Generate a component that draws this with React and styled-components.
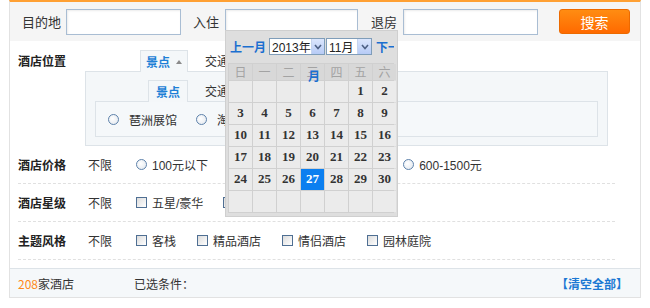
import React from "react";
import styled, { createGlobalStyle } from "styled-components";

const GlobalStyle = createGlobalStyle`
  body {
    margin: 0;
    background: #fff;
    font-family: "Liberation Sans", "Noto Sans CJK SC", sans-serif;
    font-size: 12px;
    color: #333;
  }
`;

const Wrapper = styled.div`
  margin-left: 9px;
  width: 630px;
  border: 1px solid #e2e2e2;
  border-top: 2px solid #ffa033;
`;

const SearchBar = styled.div`
  display: flex;
  align-items: center;
  height: 39px;
  background: #f5f5f5;
  padding-left: 12px;
`;

const SearchLabel = styled.label`
  width: ${(p) => p.$w}px;
  margin-left: ${(p) => p.$ml || 0}px;
  font-size: 13px;
  color: #333;
  flex-shrink: 0;
`;

const Field = styled.div`
  position: relative;
  width: ${(p) => p.$w}px;
  height: 26px;
  flex-shrink: 0;
`;

const Input = styled.input`
  box-sizing: border-box;
  width: 100%;
  height: 100%;
  border: 1px solid #a9bdd3;
  box-shadow: inset 1px 1px 2px rgba(0, 0, 0, 0.08);
  background: #fff;
  outline: none;
`;

const SearchButton = styled.button`
  margin-left: 21px;
  width: 71px;
  height: 25px;
  border: 1px solid #ec6a00;
  border-radius: 3px;
  background: linear-gradient(#ff8c12, #ff6a00);
  color: #fff;
  font-family: "Noto Sans CJK SC", sans-serif;
  font-size: 14px;
  padding: 0;
`;

/* calendar */
const Calendar = styled.div`
  position: absolute;
  left: 0;
  top: 21px;
  z-index: 5;
  box-sizing: border-box;
  width: 173px;
  padding: 0 3px 3px 3px;
  background: #dedede;
  border: 1px solid #cfcfcf;
`;

const CalHead = styled.div`
  display: flex;
  align-items: center;
  height: 32px;
  padding-left: 1px;
  overflow: hidden;
  white-space: nowrap;
`;

const CalLink = styled.span`
  color: #1a6fd0;
  font-weight: bold;
  font-size: 12px;
  font-family: "Noto Sans CJK SC", sans-serif;
  margin-right: ${(p) => p.$mr || 0}px;
  margin-left: ${(p) => p.$ml || 0}px;
`;

const Select = styled.div`
  display: flex;
  align-items: center;
  justify-content: space-between;
  box-sizing: border-box;
  width: ${(p) => p.$w}px;
  height: 17px;
  border: 1px solid #7f9db9;
  background: #fff;
  font-size: 12px;
  color: #222;
  padding-left: 2px;
  margin-right: 1px;
  flex-shrink: 0;
`;

const SelectArrow = styled.span`
  display: flex;
  align-items: center;
  justify-content: center;
  width: 13px;
  height: 15px;
  background: linear-gradient(#dbe6fd, #b7cbf6);
  border-left: 1px solid #c6d4ee;
`;

const Grid = styled.div`
  display: grid;
  grid-template-columns: repeat(7, 23px);
  grid-template-rows: 16px repeat(6, 21px);
  gap: 1px;
  background: #d0d0d0;
  border: 1px solid #d0d0d0;
  margin-left: -1px;
`;

const WeekCell = styled.div`
  display: flex;
  align-items: center;
  justify-content: center;
  background: #d8d8d8;
  color: #a3a3a3;
  font-family: "Noto Sans CJK SC", sans-serif;
  font-size: 12px;
`;

const DayCell = styled.div`
  display: flex;
  align-items: center;
  justify-content: center;
  background: ${(p) => (p.$active ? "#0b7ff0" : "#ebebeb")};
  color: ${(p) => (p.$active ? "#fff" : "#333")};
  font-family: "Liberation Serif", serif;
  font-weight: bold;
  font-size: 13px;
`;

const StrayMonth = styled.span`
  position: absolute;
  left: 82px;
  top: 36px;
  color: #1a6fd0;
  font-weight: bold;
  font-size: 12px;
  font-family: "Noto Sans CJK SC", sans-serif;
`;

/* filters */
const Filters = styled.div`
  padding: 0 25px 0 8px;
`;

const Row = styled.div`
  display: flex;
  align-items: ${(p) => (p.$top ? "flex-start" : "center")};
  height: ${(p) => (p.$top ? "auto" : "37px")};
  padding-top: ${(p) => (p.$top ? "9px" : "0")};
  border-bottom: ${(p) => (p.$dashed ? "1px dashed #e0e0e0" : "none")};
`;

const RowLabel = styled.div`
  width: 67px;
  flex-shrink: 0;
  line-height: 22px;
  font-weight: bold;
  font-family: "Noto Sans CJK SC", sans-serif;
  font-size: 12px;
  color: #222;
`;

const RowBody = styled.div`
  flex: 1;
  display: flex;
  flex-direction: column;
`;

const TabStrip = styled.div`
  display: flex;
  align-items: flex-end;
  padding-left: ${(p) => p.$pl}px;
`;

const Tab = styled.div`
  position: relative;
  z-index: 1;
  box-sizing: border-box;
  display: flex;
  align-items: center;
  justify-content: center;
  gap: 6px;
  width: ${(p) => p.$w}px;
  height: 22px;
  margin-bottom: -1px;
  border: 1px solid #dde3e8;
  border-bottom: none;
  background: #f4f7f9;
  color: #1d7fd6;
  font-weight: bold;
  font-family: "Noto Sans CJK SC", sans-serif;
`;

const TabPlain = styled.div`
  margin-left: 17px;
  height: 21px;
  line-height: 21px;
  font-family: "Noto Sans CJK SC", sans-serif;
  color: #333;
`;

const Caret = styled.span`
  width: 0;
  height: 0;
  border-left: 3px solid transparent;
  border-right: 3px solid transparent;
  border-bottom: 4px solid #8a8a8a;
`;

const Panel = styled.div`
  margin-right: 7px;
  border: 1px solid #dde3e8;
  background: #f4f7f9;
  padding: 8px 9px 8px 9px;
`;

const InnerBox = styled.div`
  display: flex;
  align-items: center;
  gap: 19px;
  height: 34px;
  border: 1px solid #dde3e8;
  background: #f5f8fa;
  padding-left: 12px;
`;

const Options = styled.div`
  display: flex;
  align-items: center;
  padding-left: 3px;
`;

const OptionList = styled.div`
  display: flex;
  align-items: center;
  gap: ${(p) => p.$gap}px;
`;

const Option = styled.span`
  display: flex;
  align-items: center;
  gap: ${(p) => p.$gap || 5}px;
  font-family: "Liberation Sans", "Noto Sans CJK SC", sans-serif;
  color: #333;
  white-space: nowrap;
`;

const Plain = styled.span`
  width: 48px;
  font-family: "Noto Sans CJK SC", sans-serif;
`;

const Radio = styled.span`
  box-sizing: border-box;
  width: 11px;
  height: 11px;
  border-radius: 50%;
  border: 1px solid #5e82ab;
  background: radial-gradient(circle at 40% 40%, #fff, #dfe5ec);
  flex-shrink: 0;
`;

const Check = styled.span`
  box-sizing: border-box;
  width: 11px;
  height: 11px;
  border: 1px solid #4f6f93;
  background: linear-gradient(135deg, #dcdcdc, #fff);
  flex-shrink: 0;
`;

const Footer = styled.div`
  display: flex;
  align-items: center;
  height: 28px;
  margin-top: 8px;
  padding: 0 12px 0 8px;
  border-top: 1px solid #dde3e8;
  background: #f5f8fa;
  font-family: "Noto Sans CJK SC", sans-serif;
`;

const Count = styled.span`
  width: 116px;
  em {
    font-style: normal;
    color: #ff8a1a;
  }
`;

const Clear = styled.span`
  margin-left: auto;
  color: #1b78d3;
  font-weight: bold;
`;

const week = ["日", "一", "二", "三", "四", "五", "六"];

function Arrow() {
  return (
    <SelectArrow>
      <svg width="8" height="6" viewBox="0 0 8 6">
        <path d="M1 1 L4 4.5 L7 1" stroke="#4d6185" strokeWidth="1.6" fill="none" />
      </svg>
    </SelectArrow>
  );
}

function DatePicker() {
  const cells = [];
  for (let i = 0; i < 5; i++) cells.push(null);
  for (let d = 1; d <= 30; d++) cells.push(d);
  while (cells.length < 42) cells.push(null);

  return (
    <Calendar>
      <CalHead>
        <CalLink $mr={3}>上一月</CalLink>
        <Select $w={56}>
          2013年
          <Arrow />
        </Select>
        <Select $w={46}>
          11月
          <Arrow />
        </Select>
        <CalLink $ml={3}>下一月</CalLink>
      </CalHead>
      <Grid>
        {week.map((w) => (
          <WeekCell key={w}>{w}</WeekCell>
        ))}
        {cells.map((d, i) => (
          <DayCell key={i} $active={d === 27}>
            {d}
          </DayCell>
        ))}
      </Grid>
      <StrayMonth>月</StrayMonth>
    </Calendar>
  );
}

function ChoiceRow({ label, items, kind, gap }) {
  const Mark = kind === "radio" ? Radio : Check;
  return (
    <Row $dashed>
      <RowLabel>{label}</RowLabel>
      <Options>
        <Plain>不限</Plain>
        <OptionList $gap={gap}>
          {items.map((t) => (
            <Option key={t}>
              <Mark />
              {t}
            </Option>
          ))}
        </OptionList>
      </Options>
    </Row>
  );
}

export default function App() {
  return (
    <>
      <GlobalStyle />
      <Wrapper>
        <SearchBar>
          <SearchLabel $w={44}>目的地</SearchLabel>
          <Field $w={115}>
            <Input />
          </Field>
          <SearchLabel $w={32} $ml={12}>入住</SearchLabel>
          <Field $w={133}>
            <Input />
            <DatePicker />
          </Field>
          <SearchLabel $w={32} $ml={13}>退房</SearchLabel>
          <Field $w={135}>
            <Input />
          </Field>
          <SearchButton>搜索</SearchButton>
        </SearchBar>

        <Filters>
          <Row $top>
            <RowLabel>酒店位置</RowLabel>
            <RowBody>
              <TabStrip $pl={55}>
                <Tab $w={48}>
                  景点 <Caret />
                </Tab>
                <TabPlain>交通</TabPlain>
              </TabStrip>
              <Panel>
                <TabStrip $pl={53}>
                  <Tab $w={40}>景点</Tab>
                  <TabPlain>交通</TabPlain>
                </TabStrip>
                <InnerBox>
                  <Option $gap={10}>
                    <Radio />
                    琶洲展馆
                  </Option>
                  <Option $gap={10}>
                    <Radio />
                    淘金
                  </Option>
                </InnerBox>
              </Panel>
            </RowBody>
          </Row>

          <ChoiceRow
            label="酒店价格"
            kind="radio"
            gap={17}
            items={["100元以下", "100-300元", "300-600元", "600-1500元"]}
          />
          <ChoiceRow
            label="酒店星级"
            kind="check"
            gap={20}
            items={["五星/豪华", "四星/高档", "三星/舒适"]}
          />
          <ChoiceRow
            label="主题风格"
            kind="check"
            gap={21}
            items={["客栈", "精品酒店", "情侣酒店", "园林庭院"]}
          />
        </Filters>

        <Footer>
          <Count>
            <em>208</em>家酒店
          </Count>
          <span>已选条件：</span>
          <Clear>【清空全部】</Clear>
        </Footer>
      </Wrapper>
    </>
  );
}
